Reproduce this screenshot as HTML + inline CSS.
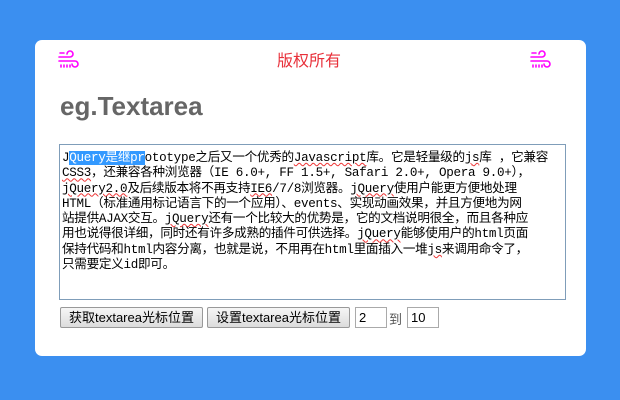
<!DOCTYPE html>
<html><head><meta charset="utf-8"><style>
*{margin:0;padding:0;box-sizing:border-box}
body{width:620px;height:400px;background:#3b8ff0;font-family:"Liberation Sans","Noto Sans CJK SC",sans-serif;position:relative;overflow:hidden}
.card{position:absolute;left:35px;top:40px;width:551px;height:316px;background:#fff;border-radius:7px}
.top{position:absolute;left:0;top:0;width:551px;height:34px;}
.cr{position:absolute;left:242px;top:7px;color:#e8303a;font-size:16px}
.ic{position:absolute;top:9px}
h1{position:absolute;left:25px;top:51px;font-size:26px;color:#666;font-weight:bold}
.ta{position:absolute;left:24px;top:104px;width:507px;height:156px;border:1px solid #7f9db9;font-family:"Liberation Mono","Noto Sans CJK SC",monospace;font-size:12.6px;line-height:15.3px;padding:6px 2px;color:#000;white-space:nowrap;overflow:hidden;letter-spacing:-0.3px}
.sel{background:#3399ff;color:#fff}
.u{text-decoration:underline wavy #e33;text-decoration-thickness:1px}
.btn{position:absolute;top:267px;height:21px;border:1px solid #999;background:linear-gradient(#f6f6f6,#dcdcdc);font-size:13px;line-height:19px;text-align:center;color:#000;border-radius:2px}
.in{position:absolute;top:267px;height:21px;border:1px solid #aaa;font-size:13px;line-height:19px;padding-left:3px}
</style></head><body>
<div class="card">
<div class="top">
<svg class="ic" style="left:22px" width="24" height="20" viewBox="0 0 24 20" fill="none" stroke="#f0f" stroke-width="1.6" stroke-linecap="round"><path d="M2 8h11a3 3 0 1 0-3-3"/><path d="M2 12h16a3 3 0 1 1-3 3"/><path d="M4 16v2M7 16v2M10 16v2M13 16v2"/><path d="M3 4h4"/></svg>
<div class="cr">版权所有</div>
<svg class="ic" style="left:494px" width="24" height="20" viewBox="0 0 24 20" fill="none" stroke="#f0f" stroke-width="1.6" stroke-linecap="round"><path d="M2 8h11a3 3 0 1 0-3-3"/><path d="M2 12h16a3 3 0 1 1-3 3"/><path d="M4 16v2M7 16v2M10 16v2M13 16v2"/><path d="M3 4h4"/></svg>
</div>
<h1>eg.Textarea</h1>
<div class="ta">J<span class="sel">Query是继pr</span>ototype之后又一个优秀的<span class="u">Javascript</span>库。它是轻量级的<span class="u">js</span>库 ，它兼容<br><span class="u">CSS3</span>，还兼容各种浏览器（IE 6.0+, FF 1.5+, Safari 2.0+, Opera 9.0+），<br><span class="u">jQuery2.0</span>及后续版本将不再支持<span class="u">IE6</span>/7/8浏览器。<span class="u">jQuery</span>使用户能更方便地处理<br>HTML（标准通用标记语言下的一个应用）、events、实现动画效果，并且方便地为网<br>站提供AJAX交互。<span class="u">jQuery</span>还有一个比较大的优势是，它的文档说明很全，而且各种应<br>用也说得很详细，同时还有许多成熟的插件可供选择。<span class="u">jQuery</span>能够使用户的html页面<br>保持代码和html内容分离，也就是说，不用再在html里面插入一堆<span class="u">js</span>来调用命令了，<br>只需要定义id即可。</div>
<div class="btn" style="left:25px;width:143px">获取textarea光标位置</div>
<div class="btn" style="left:172px;width:143px">设置textarea光标位置</div>
<div class="in" style="left:320px;width:32px">2</div>
<div style="position:absolute;left:354px;top:269px;font-size:13px;color:#555">到</div>
<div class="in" style="left:372px;width:32px">10</div>
</div>
</body></html>
